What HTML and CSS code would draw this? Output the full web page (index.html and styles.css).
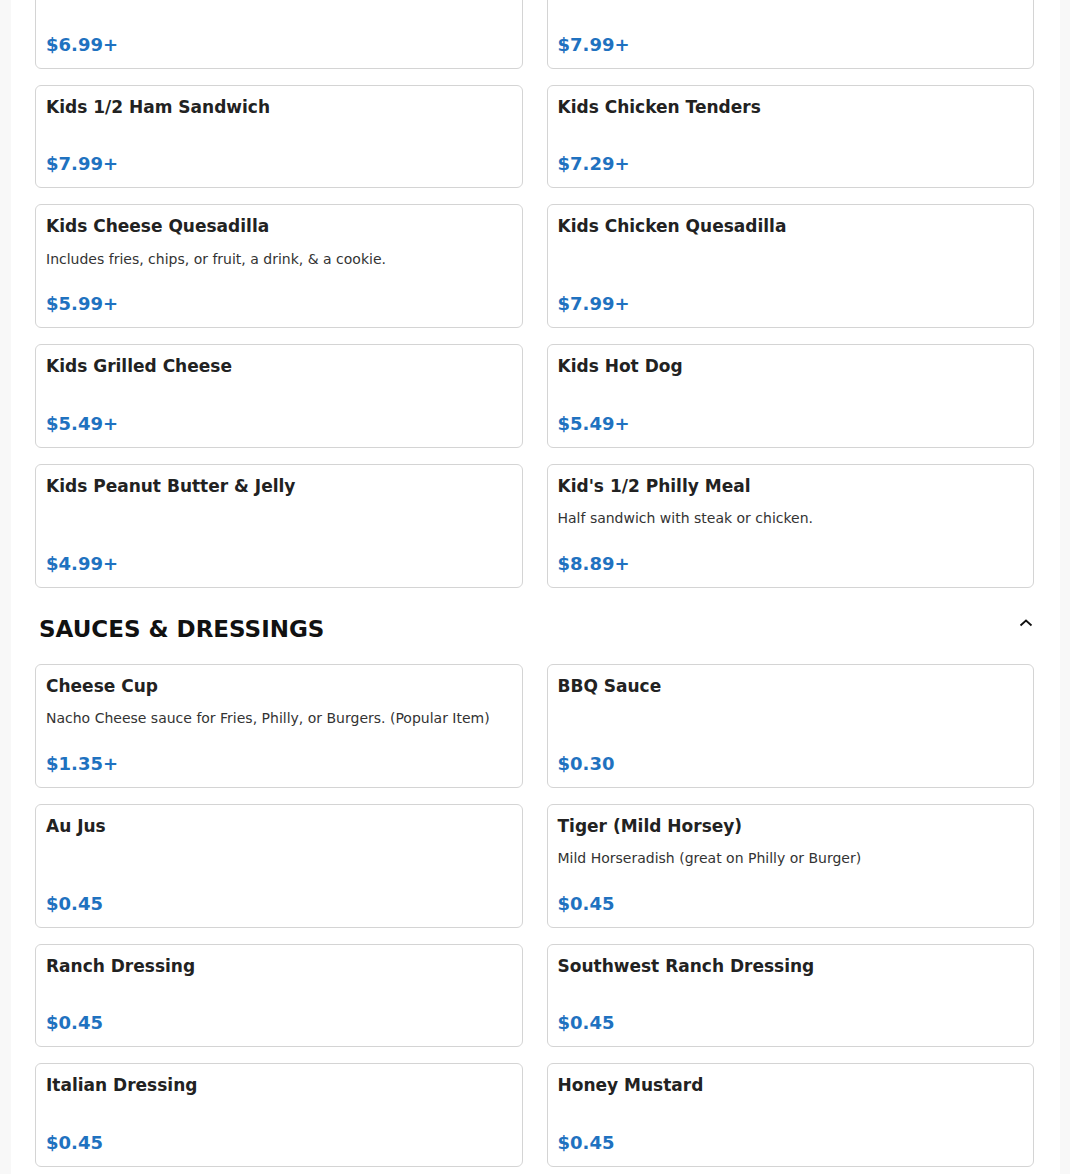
FILE: index.html
```html
<!DOCTYPE html>
<html lang="en">
<head>
<meta charset="utf-8">
<title>Menu</title>
<link rel="stylesheet" href="styles.css">
</head>
<body>
<main class="page">
  <section class="menu-section first">
    <div class="grid">
      <div class="card"><div class="title">&nbsp;</div><div class="desc"></div><div class="price">$6.99+</div></div>
      <div class="card"><div class="title">&nbsp;</div><div class="desc"></div><div class="price">$7.99+</div></div>
      <div class="card"><div class="title">Kids 1/2 Ham Sandwich</div><div class="desc"></div><div class="price">$7.99+</div></div>
      <div class="card"><div class="title">Kids Chicken Tenders</div><div class="desc"></div><div class="price">$7.29+</div></div>
      <div class="card"><div class="title">Kids Cheese Quesadilla</div><div class="desc">Includes fries, chips, or fruit, a drink, &amp; a cookie.</div><div class="price">$5.99+</div></div>
      <div class="card"><div class="title">Kids Chicken Quesadilla</div><div class="desc"></div><div class="price">$7.99+</div></div>
      <div class="card"><div class="title">Kids Grilled Cheese</div><div class="desc"></div><div class="price">$5.49+</div></div>
      <div class="card"><div class="title">Kids Hot Dog</div><div class="desc"></div><div class="price">$5.49+</div></div>
      <div class="card"><div class="title">Kids Peanut Butter &amp; Jelly</div><div class="desc"></div><div class="price">$4.99+</div></div>
      <div class="card"><div class="title">Kid's 1/2 Philly Meal</div><div class="desc">Half sandwich with steak or chicken.</div><div class="price">$8.89+</div></div>
    </div>
  </section>
  <section class="menu-section">
    <div class="section-head">
      <h2 class="section-title">SAUCES &amp; DRESSINGS</h2>
      <svg class="chevron" width="16" height="16" viewBox="0 0 16 16" aria-hidden="true"><path d="M2.5 10.5 L8 5.5 L13.5 10.5" fill="none" stroke="#111" stroke-width="1.8"/></svg>
    </div>
    <div class="grid">
      <div class="card"><div class="title">Cheese Cup</div><div class="desc">Nacho Cheese sauce for Fries, Philly, or Burgers. (Popular Item)</div><div class="price">$1.35+</div></div>
      <div class="card"><div class="title">BBQ Sauce</div><div class="desc"></div><div class="price">$0.30</div></div>
      <div class="card"><div class="title">Au Jus</div><div class="desc"></div><div class="price">$0.45</div></div>
      <div class="card"><div class="title">Tiger (Mild Horsey)</div><div class="desc">Mild Horseradish (great on Philly or Burger)</div><div class="price">$0.45</div></div>
      <div class="card"><div class="title">Ranch Dressing</div><div class="desc"></div><div class="price">$0.45</div></div>
      <div class="card"><div class="title">Southwest Ranch Dressing</div><div class="desc"></div><div class="price">$0.45</div></div>
      <div class="card"><div class="title">Italian Dressing</div><div class="desc"></div><div class="price">$0.45</div></div>
      <div class="card"><div class="title">Honey Mustard</div><div class="desc"></div><div class="price">$0.45</div></div>
    </div>
  </section>
</main>
</body>
</html>
```
FILE: styles.css
```css
html, body {
  margin: 0;
  padding: 0;
  background: #f8f8f8;
  font-family: "DejaVu Sans", "Liberation Sans", sans-serif;
  color: #222;
}
.page {
  width: 999px;
  margin-left: 11px;
  padding: 0 26px 40px 24px;
  background: #fff;
  overflow: hidden;
}
.menu-section.first {
  margin-top: -35px;
}
.grid {
  display: grid;
  grid-template-columns: 1fr 1fr;
  gap: 16px 24px;
}
.card {
  display: flex;
  flex-direction: column;
  border: 1px solid #d4d4d4;
  border-radius: 6px;
  padding: 10px;
}
.title {
  font-size: 17px;
  font-weight: bold;
  line-height: 22px;
  color: #222;
}
.desc {
  font-size: 14px;
  line-height: 20.5px;
  margin-top: 11.5px;
  color: #333;
}
.price {
  margin-top: auto;
  padding-top: 21px;
  font-size: 18px;
  font-weight: bold;
  line-height: 27px;
  color: #1f72c0;
}
.section-head {
  display: flex;
  align-items: center;
  justify-content: space-between;
  padding: 0 0 0 4px;
  margin: 17px 0 11px;
  height: 48px;
}
.section-title {
  margin: 0;
  font-size: 23px;
  font-weight: bold;
  color: #111;
}
.chevron {
  display: block;
  margin-top: -12px;
}
```
